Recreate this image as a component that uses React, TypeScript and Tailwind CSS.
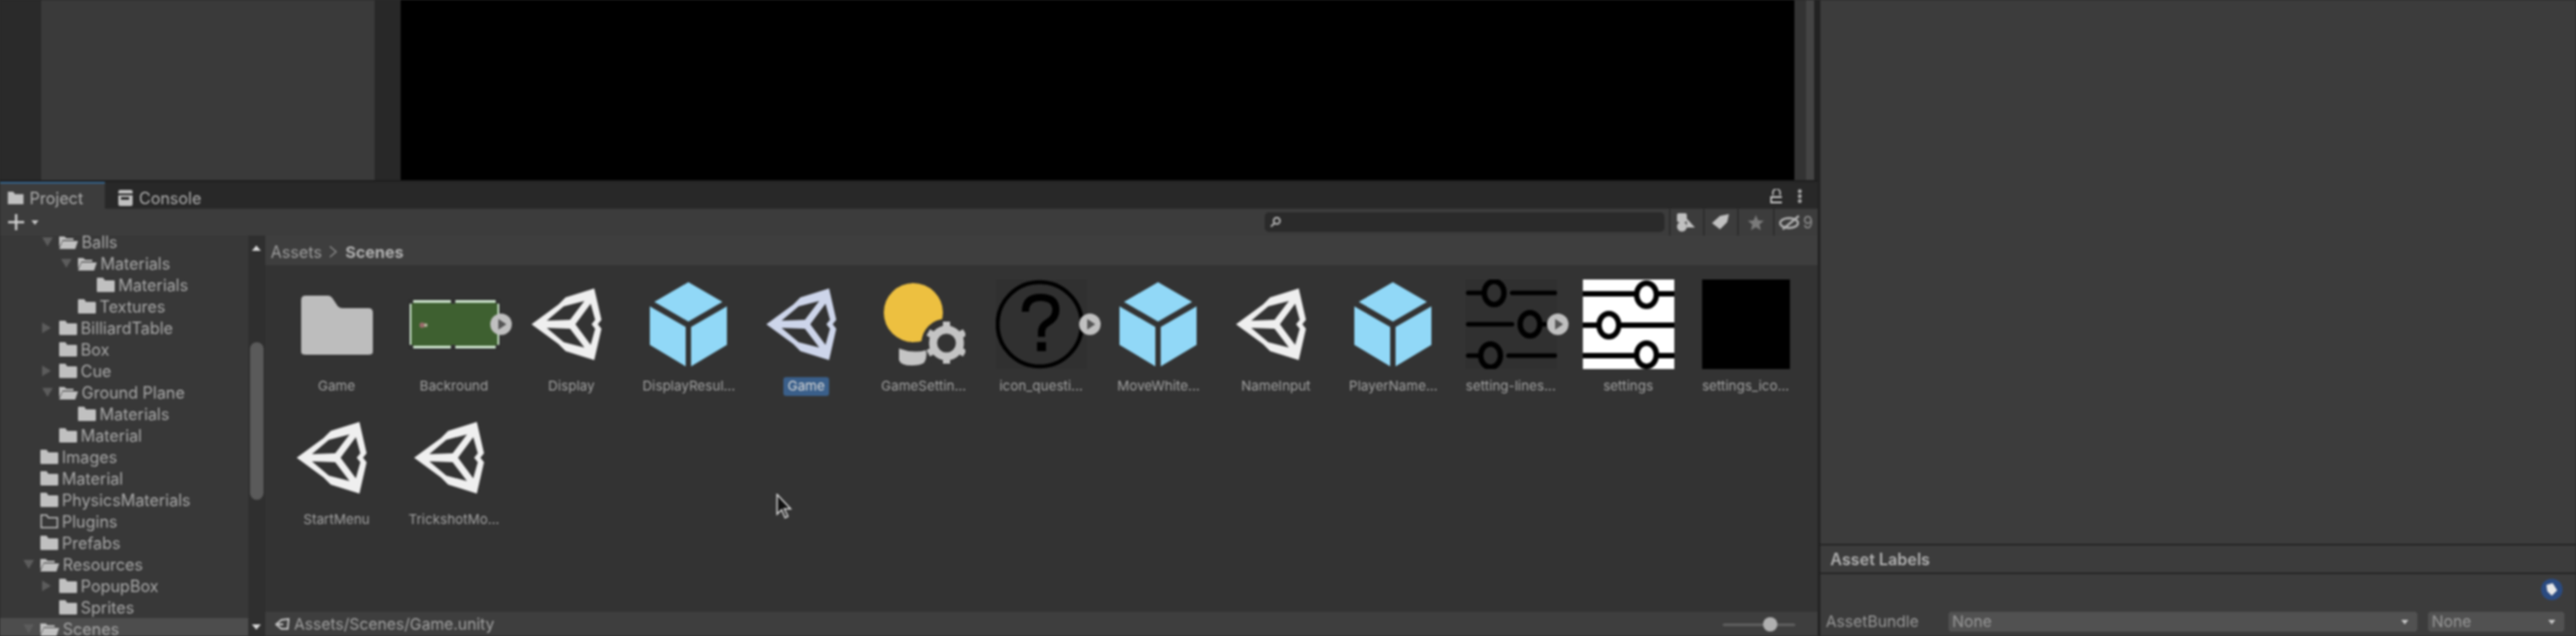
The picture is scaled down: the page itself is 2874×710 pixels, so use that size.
import type { ReactNode } from 'react';

const GREY = '#c0c0c0';

type Kind = 'closed' | 'open' | 'outline';

function TreeFolder({ kind }: { kind: Kind }) {
  if (kind === 'open') {
    return (
      <svg width="21" height="16" viewBox="0 0 21 16" className="shrink-0">
        <path d="M0 2 h6 l2 2 h8 v2 h-12 l-4 8z" fill={GREY} />
        <path d="M4 7 h17 l-3 9 h-18z" fill={GREY} />
      </svg>
    );
  }
  if (kind === 'outline') {
    return (
      <svg width="20" height="16" viewBox="0 0 20 16" className="shrink-0">
        <path d="M1 15 V1 h6 l2 3 h10 v11z" fill="none" stroke={GREY} strokeWidth="1.5" />
      </svg>
    );
  }
  return (
    <svg width="20" height="16" viewBox="0 0 20 16" className="shrink-0">
      <path d="M0 1 q0 -1 1 -1 h6 l2 3 h10 q1 0 1 1 v11 q0 1 -1 1 h-18 q-1 0 -1 -1z" fill={GREY} />
    </svg>
  );
}

type Row = { name: string; level: number; arrow?: 'right' | 'down'; kind?: Kind; selected?: boolean };

const rows: Row[] = [
  { name: 'Balls', level: 1, arrow: 'down', kind: 'open' },
  { name: 'Materials', level: 2, arrow: 'down', kind: 'open' },
  { name: 'Materials', level: 3 },
  { name: 'Textures', level: 2 },
  { name: 'BilliardTable', level: 1, arrow: 'right' },
  { name: 'Box', level: 1 },
  { name: 'Cue', level: 1, arrow: 'right' },
  { name: 'Ground Plane', level: 1, arrow: 'down', kind: 'open' },
  { name: 'Materials', level: 2 },
  { name: 'Material', level: 1 },
  { name: 'Images', level: 0 },
  { name: 'Material', level: 0 },
  { name: 'PhysicsMaterials', level: 0 },
  { name: 'Plugins', level: 0, kind: 'outline' },
  { name: 'Prefabs', level: 0 },
  { name: 'Resources', level: 0, arrow: 'down', kind: 'open' },
  { name: 'PopupBox', level: 1, arrow: 'right' },
  { name: 'Sprites', level: 1 },
  { name: 'Scenes', level: 0, arrow: 'down', kind: 'open', selected: true },
];

function TreeRow({ row }: { row: Row }) {
  const indent = [26, 47, 68, 89][row.level];
  return (
    <div
      className={`flex h-[24px] shrink-0 items-center text-[18px] text-[#a8a8a8] ${row.selected ? 'bg-[#4d4d4d]' : ''}`}
      style={{ paddingLeft: indent }}
    >
      <span className="flex w-[19px] shrink-0 items-center">
        {row.arrow === 'right' && <span className="h-0 w-0 border-y-[6px] border-l-[10px] border-y-transparent border-l-[#5c5c5c]" />}
        {row.arrow === 'down' && <span className="h-0 w-0 border-x-[6px] border-t-[10px] border-x-transparent border-t-[#5c5c5c]" />}
      </span>
      <TreeFolder kind={row.kind ?? 'closed'} />
      <span className="ml-[4px] whitespace-nowrap">{row.name}</span>
    </div>
  );
}

function UnityLogo({ color = '#efefef' }: { color?: string }) {
  return (
    <svg width="78" height="80" viewBox="0 0 78 80" className="mr-[12px]">
      <path
        fillRule="evenodd"
        fill={color}
        d="M0 40 L30 18 L38 10 L70 0 L78 35 L74 40 L78 45 L70 80 L38 70 L30 62z
           M17 36 L36 20 L59 14 L43 35z
           M17 44 L36 60 L59 66 L43 45z
           M66 17 L49 40 L66 63 L71 45 L67 40 L71 35z"
      />
    </svg>
  );
}

function Cube() {
  return (
    <svg width="86" height="94" viewBox="0 0 86 94" fill="#91d8f7" className="mr-[2px]">
      <path d="M43 0 L81 22 L43 44 L5 22z" />
      <path d="M0 27 L40 50 V94 L0 70z" />
      <path d="M46 50 L86 27 V70 L46 94z" />
    </svg>
  );
}

function Play({ x }: { x: string }) {
  return (
    <span className={`absolute top-1/2 flex h-[24px] w-[24px] -translate-y-1/2 items-center justify-center rounded-full bg-[#c0c0c0] ${x}`}>
      <span className="ml-[3px] h-0 w-0 border-y-[6px] border-l-[9px] border-y-transparent border-l-[#555]" />
    </span>
  );
}

function SceneFolder() {
  return (
    <svg width="80" height="66" viewBox="0 0 80 66" className="mt-[1px]">
      <path d="M0 5 q0 -5 5 -5 h25 q3 0 5 3 l6 9 q2 2 5 2 h29 q5 0 5 5 v44 q0 3 -5 3 h-70 q-5 0 -5 -3z" fill="#bdbdbd" />
    </svg>
  );
}

function TableThumb() {
  return (
    <div className="relative">
      <svg width="102" height="56" viewBox="0 0 102 56">
        <rect width="102" height="56" fill="#2b2b2b" />
        <rect x="1" y="1" width="100" height="54" fill="#cfe6cf" />
        <rect x="3" y="4" width="96" height="48" fill="#3e6030" />
        <rect x="47" y="1" width="5" height="4" fill="#333" />
        <rect x="47" y="51" width="5" height="4" fill="#333" />
        <rect x="1" y="1" width="4" height="4" fill="#333" />
        <rect x="97" y="1" width="4" height="4" fill="#333" />
        <rect x="1" y="51" width="4" height="4" fill="#333" />
        <rect x="97" y="51" width="4" height="4" fill="#333" />
        <circle cx="15" cy="29" r="3" fill="#9a6a6a" />
        <circle cx="19" cy="29" r="2" fill="#b8b8a0" />
      </svg>
      <Play x="right-[-13px]" />
    </div>
  );
}

function GameSettingsIcon() {
  return (
    <svg width="92" height="94" viewBox="0 0 92 94">
      <circle cx="34" cy="34" r="33" fill="#edc040" />
      <circle cx="70" cy="68" r="27" fill="#333333" />
      <path d="M18 74 q16 6 30 2 v-0 q2 8 -2 14 q-4 3 -14 3 q-12 0 -14 -6z" fill="#c4c4c4" />
      <g stroke="#c4c4c4" strokeWidth="8">
        <path d="M71 44 V91" />
        <path d="M50.6 56 L91.4 79.5" />
        <path d="M50.6 79.5 L91.4 56" />
      </g>
      <circle cx="71" cy="68" r="15" fill="#333333" stroke="#c4c4c4" strokeWidth="9" />
    </svg>
  );
}

function QuestionIcon() {
  return (
    <div className="relative bg-[#303030]">
      <svg width="102" height="100" viewBox="0 0 102 100">
        <circle cx="49" cy="50" r="47" fill="none" stroke="#000" strokeWidth="4.5" />
        <path d="M33 36 q0 -16 17 -16 q17 0 17 14 q0 9 -9 14 q-7 4 -7 11 v5" fill="none" stroke="#000" strokeWidth="8" />
        <rect x="46" y="70" width="10" height="10" fill="#000" />
      </svg>
      <Play x="right-[-15px]" />
    </div>
  );
}

function SlidersIcon({ lines }: { lines?: boolean }) {
  const knob = lines ? '#303030' : '#fff';
  return (
    <svg width="102" height="100" viewBox="0 0 102 100">
      <rect width="102" height="100" fill={lines ? '#303030' : '#fff'} />
      {lines ? (
        <g stroke="#000" strokeWidth="5" strokeLinecap="round">
          <path d="M3 15 H24 M52 15 H100" />
          <path d="M3 50 H52 M80 50 H100" />
          <path d="M3 85 H22 M48 85 H100" />
        </g>
      ) : (
        <g stroke="#000" strokeWidth="6">
          <path d="M0 16 H102 M0 51 H102 M0 85 H102" />
        </g>
      )}
      <g fill={knob} stroke="#000" strokeWidth="6">
        <ellipse cx={lines ? 32 : 71} cy={lines ? 15 : 17} rx="11" ry="13" />
        <ellipse cx={lines ? 72 : 29} cy={lines ? 50 : 51} rx="11" ry="13" />
        <ellipse cx={lines ? 28 : 71} cy={lines ? 85 : 84} rx="11" ry="13" />
      </g>
    </svg>
  );
}

type Asset = { label: string; icon: ReactNode; selected?: boolean };

const assets: Asset[] = [
  { label: 'Game', icon: <SceneFolder /> },
  { label: 'Backround', icon: <TableThumb /> },
  { label: 'Display', icon: <UnityLogo /> },
  { label: 'DisplayResul...', icon: <Cube /> },
  { label: 'Game', icon: <UnityLogo color="#cdd5ea" />, selected: true },
  { label: 'GameSettin...', icon: <GameSettingsIcon /> },
  { label: 'icon_questi...', icon: <QuestionIcon /> },
  { label: 'MoveWhite...', icon: <Cube /> },
  { label: 'NameInput', icon: <UnityLogo /> },
  { label: 'PlayerName...', icon: <Cube /> },
  {
    label: 'setting-lines...',
    icon: (
      <div className="relative">
        <SlidersIcon lines />
        <Play x="right-[-13px]" />
      </div>
    ),
  },
  { label: 'settings', icon: <SlidersIcon /> },
  { label: 'settings_ico...', icon: <div className="h-[100px] w-[98px] bg-black" /> },
  { label: 'StartMenu', icon: <UnityLogo /> },
  { label: 'TrickshotMo...', icon: <UnityLogo /> },
];

function AssetCell({ asset }: { asset: Asset }) {
  return (
    <div className="flex flex-col items-center">
      <div className="flex h-[106px] items-center justify-center">{asset.icon}</div>
      <div
        className={`mt-[6px] flex h-[21px] items-center whitespace-nowrap rounded-[3px] px-[5px] text-[15px] ${
          asset.selected ? 'bg-[#3a5f8a] text-[#d8d8d8]' : 'text-[#a0a0a0]'
        }`}
      >
        {asset.label}
      </div>
    </div>
  );
}

function ToolButton({ children, width }: { children: ReactNode; width: string }) {
  return <div className={`flex h-full items-center justify-center border-l-2 border-[#2c2c2c] ${width}`}>{children}</div>;
}

export default function App() {
  return (
    <div className="h-[710px] w-[2874px] overflow-hidden bg-[#2a2a2a]">
      <div className="relative flex h-[710px] w-[2874px] bg-[#222] font-['Inter',sans-serif] blur-[0.9px]">
        <div className="flex w-[2028px] shrink-0 flex-col">
          {/* scene view row */}
          <div className="flex h-[203px] shrink-0 border-b-2 border-[#1e1e1e]">
            <div className="w-[46px] bg-[#2a2a2a]" />
            <div className="w-[372px] bg-[#3a3a3a]" />
            <div className="w-[29px] bg-[#282828]" />
            <div className="w-[1555px] bg-black" />
            <div className="w-[13px] bg-[#333]" />
            <div className="w-[9px] bg-[#444]" />
            <div className="w-[4px] bg-[#222]" />
          </div>

          {/* tabs */}
          <div className="flex h-[30px] shrink-0 items-center bg-[#282828]">
            <div className="flex h-full w-[117px] items-center border-t-2 border-[#35648c] bg-[#3c3c3c] pl-[8px] pt-[4px]">
              <svg width="19" height="14" viewBox="0 0 20 16" className="shrink-0">
                <path d="M0 0 h7 l2 3 h11 v13 h-20z" fill={GREY} />
              </svg>
              <span className="ml-[6px] text-[18px] text-[#aeaeae]">Project</span>
            </div>
            <div className="ml-[15px] flex items-center pt-[6px]">
              <svg width="16" height="18" viewBox="0 0 16 18">
                <rect width="16" height="18" rx="2" fill={GREY} />
                <rect x="0" y="4" width="16" height="2" fill="#282828" />
                <rect x="3" y="8" width="9" height="3" fill="#282828" />
              </svg>
              <span className="ml-[7px] text-[18px] text-[#aeaeae]">Console</span>
            </div>
            <div className="ml-auto flex items-center gap-[16px] pr-[17px] pt-[2px]">
              <svg width="14" height="16" viewBox="0 0 14 16">
                <path d="M3 7 V4 a4 4 0 0 1 8 0 V7" fill="none" stroke="#c8c8c8" strokeWidth="1.6" />
                <path d="M13 9 H1 V15 H13" fill="none" stroke="#c8c8c8" strokeWidth="1.8" />
              </svg>
              <svg width="6" height="16" viewBox="0 0 6 16" fill="#a8a8a8">
                <circle cx="3" cy="2.5" r="2.2" />
                <circle cx="3" cy="8" r="2.2" />
                <circle cx="3" cy="13.5" r="2.2" />
              </svg>
            </div>
          </div>

          {/* toolbar */}
          <div className="flex h-[30px] shrink-0 items-center bg-[#3c3c3c]">
            <svg width="20" height="20" viewBox="0 0 20 20" className="ml-[8px]">
              <path d="M10 1 V19 M1 10 H19" stroke="#d0d0d0" strokeWidth="2.6" />
            </svg>
            <span className="ml-[7px] h-0 w-0 border-x-[4px] border-t-[5px] border-x-transparent border-t-[#c8c8c8]" />
            <div className="ml-auto flex h-full items-center">
              <div className="mr-[5px] flex h-[22px] w-[446px] items-center rounded-[5px] bg-[#2a2a2a] pl-[5px]">
                <svg width="14" height="14" viewBox="0 0 14 14" fill="none" stroke="#b0b0b0" strokeWidth="2">
                  <circle cx="8.5" cy="5.5" r="3.5" />
                  <path d="M6 8 L2 12" />
                </svg>
              </div>
              <ToolButton width="w-[38px]">
                <svg width="26" height="22" viewBox="0 0 26 22" fill="#c0c0c0">
                  <rect x="2" y="1" width="11" height="10" rx="2" />
                  <circle cx="7.5" cy="16" r="5.5" />
                  <path d="M13 7 L22 17 H13z" />
                </svg>
              </ToolButton>
              <ToolButton width="w-[38px]">
                <svg width="20" height="18" viewBox="0 0 20 18" fill="#c0c0c0">
                  <path d="M0 10 L9 2 L19 0 L17 9 L9 17z" />
                </svg>
              </ToolButton>
              <ToolButton width="w-[40px]">
                <svg width="18" height="17" viewBox="0 0 18 17" fill="#7a7a7a">
                  <path d="M9 0 L11.5 6 L18 6.5 L13 10.5 L14.5 17 L9 13.5 L3.5 17 L5 10.5 L0 6.5 L6.5 6z" />
                </svg>
              </ToolButton>
              <ToolButton width="w-[50px]">
                <svg width="26" height="18" viewBox="0 0 26 18" fill="none" stroke="#b0b0b0" strokeWidth="2.4">
                  <ellipse cx="11" cy="10" rx="10" ry="5.5" />
                  <path d="M4 17 L22 2" />
                </svg>
                <span className="text-[18px] text-[#8e8e8e]">9</span>
              </ToolButton>
            </div>
          </div>

          {/* project body */}
          <div className="flex min-h-0 flex-1">
            <div className="flex h-[447px] w-[277px] shrink-0 flex-col overflow-hidden bg-[#383838]">
              <div className="-mt-[5px] flex flex-col">
                {rows.map((row, i) => (
                  <TreeRow key={i} row={row} />
                ))}
              </div>
            </div>

            {/* scrollbar */}
            <div className="relative w-[19px] shrink-0 bg-[#2f2f2f]">
              <span className="absolute left-[4px] top-[11px] h-0 w-0 border-x-[5px] border-b-[6px] border-x-transparent border-b-[#d8d8d8]" />
              <div className="absolute left-[2px] top-[119px] h-[176px] w-[15px] rounded-full bg-[#5a5a5a]" />
              <span className="absolute bottom-[7px] left-[4px] h-0 w-0 border-x-[5px] border-t-[6px] border-x-transparent border-t-[#d8d8d8]" />
            </div>

            <div className="flex min-w-0 flex-1 flex-col bg-[#333333]">
              <div className="flex h-[33px] shrink-0 items-center bg-[#3e3e3e] pl-[6px] pt-[3px] text-[18px] text-[#9e9e9e]">
                <span>Assets</span>
                <svg width="10" height="14" viewBox="0 0 10 14" className="mx-[8px]" fill="none" stroke="#8a8a8a" strokeWidth="1.5">
                  <path d="M1 1 L8 7 L1 13" />
                </svg>
                <span className="font-bold text-[#b0b0b0]">Scenes</span>
              </div>
              <div className="grid flex-1 grid-cols-[repeat(13,131px)] auto-rows-[149px] pl-[14px] pt-[13px]">
                {assets.map((asset, i) => (
                  <AssetCell key={i} asset={asset} />
                ))}
              </div>
              <div className="flex h-[27px] shrink-0 items-center bg-[#3e3e3e] pl-[11px] pt-[1px] text-[17.5px] text-[#a0a0a0]">
                <svg width="16" height="14" viewBox="0 0 16 14" fill="none" stroke="#c0c0c0" strokeWidth="2" className="mr-[5px]">
                  <path d="M1 7 L7 2 L15 1 L14 12 L7 12z M1 7 H9" />
                </svg>
                <span>Assets/Scenes/Game.unity</span>
                <div className="relative ml-auto mr-[25px] h-[3px] w-[81px] rounded bg-[#5e5e5e]">
                  <span className="absolute left-[45px] top-[-7px] h-[16px] w-[16px] rounded-full bg-[#b0b0b0]" />
                </div>
              </div>
            </div>
          </div>
        </div>

        {/* inspector */}
        <div className="ml-[3px] flex min-w-0 flex-1 flex-col bg-[#3c3c3c]">
          <div className="h-[607px] shrink-0" />
          <div className="flex h-[34px] shrink-0 items-center border-y-2 border-[#262626] pl-[11px] text-[18px] font-semibold text-[#b0b0b0]">
            Asset Labels
          </div>
          <div className="flex h-[42px] shrink-0 items-center justify-end pb-[8px] pr-[15px]">
            <div className="flex h-[24px] w-[24px] items-center justify-center rounded-full bg-[#2a4a80]">
              <svg width="12" height="14" viewBox="0 0 12 14" fill="#e8e8e8">
                <path d="M0 2 L7 0 L12 8 L6 14 L1 9z" />
              </svg>
            </div>
          </div>
          <div className="flex h-[22px] shrink-0 items-center text-[17.5px] text-[#989898]">
            <span className="ml-[6px] w-[137px] whitespace-nowrap">AssetBundle</span>
            <div className="flex h-full w-[523px] items-center justify-between rounded-[3px] bg-[#515151] pl-[4px] pr-[10px]">
              <span>None</span>
              <span className="h-0 w-0 border-x-[4px] border-t-[5px] border-x-transparent border-t-[#c8c8c8]" />
            </div>
            <div className="ml-[12px] flex h-full w-[152px] items-center justify-between rounded-[3px] bg-[#515151] pl-[4px] pr-[10px]">
              <span>None</span>
              <span className="h-0 w-0 border-x-[4px] border-t-[5px] border-x-transparent border-t-[#c8c8c8]" />
            </div>
          </div>
        </div>

        {/* mouse cursor */}
        <svg width="18" height="28" viewBox="0 0 18 28" className="absolute left-[866px] top-[551px]">
          <path d="M1 1 V23 L6 18 L10 27 L13 25.5 L9 17 H16z" fill="#111" stroke="#ddd" strokeWidth="1.5" />
        </svg>
      </div>
    </div>
  );
}
